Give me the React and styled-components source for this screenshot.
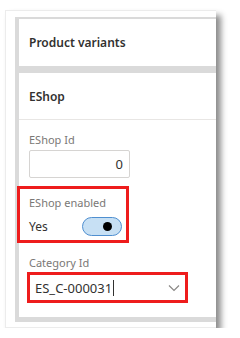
import React from "react";
import styled, { createGlobalStyle } from "styled-components";

const Global = createGlobalStyle`
  html, body { margin: 0; padding: 0; background: #ffffff; }
  body { font-family: "Noto Sans", "Open Sans", Arial, sans-serif; }
  * { box-sizing: border-box; }
`;

const Frame = styled.div`
  margin: 10px 0 0 5px;
  width: 211px;
  height: 318px;
  background: #ffffff;
  border: 1px solid #ececec;
  border-right: none;
  box-shadow: 5px 5px 6px rgba(0, 0, 0, 0.45);
  padding: 6px 0 5px 9px;
  display: flex;
`;

const Page = styled.div`
  flex: 1;
  background: #dadada;
  padding: 2px 0 5px 4px;
  display: flex;
  flex-direction: column;
  gap: 7px;
`;

const Panel = styled.section`
  background: #ffffff;
  display: flex;
  flex-direction: column;
  flex: ${(p) => (p.$grow ? 1 : "none")};
`;

const Header = styled.div`
  height: ${(p) => p.$h}px;
  display: flex;
  align-items: center;
  padding-left: 10px;
  font-size: 12px;
  font-weight: 600;
  color: #323130;
  border-bottom: ${(p) => (p.$line ? "1px solid #e8e6e4" : "none")};
`;

const Body = styled.div`
  padding: 12px 0 0 10px;
  display: flex;
  flex-direction: column;
`;

const Label = styled.div`
  font-size: 11px;
  line-height: 16px;
  color: #7a7876;
  height: 16px;
`;

const NumberBox = styled.div`
  margin-top: 2px;
  width: 101px;
  height: 28px;
  border: 1px solid #d6d4d2;
  border-radius: 2px;
  display: flex;
  align-items: center;
  justify-content: flex-end;
  padding-right: 6px;
  font-size: 13px;
  color: #323130;
`;

const Highlight = styled.div`
  border: 3px solid #ee1c1c;
  margin-left: ${(p) => p.$ml}px;
  margin-top: ${(p) => p.$mt}px;
  width: ${(p) => p.$w}px;
  height: ${(p) => p.$h}px;
  padding: ${(p) => p.$pad};
  display: flex;
  flex-direction: column;
`;

const ToggleRow = styled.div`
  margin-top: 6px;
  display: flex;
  align-items: center;
  gap: 0;
`;

const Value = styled.span`
  width: 53px;
  font-size: 12px;
  color: #323130;
`;

const Toggle = styled.div`
  width: 40px;
  height: 19px;
  border-radius: 10px;
  border: 1px solid #4f8fd0;
  background: #c7e0f4;
  display: flex;
  align-items: center;
  justify-content: flex-end;
  padding-right: 9px;
`;

const Knob = styled.span`
  width: 9px;
  height: 9px;
  border-radius: 50%;
  background: #000000;
`;

const SelectBox = styled.div`
  flex: 1;
  background: #ffffff;
  display: flex;
  align-items: center;
  padding-left: 5px;
  padding-right: 5px;
  font-size: 13px;
  color: #323130;
`;

const Caret = styled.span`
  display: inline-block;
  width: 1px;
  height: 16px;
  background: #323130;
  margin-left: 1px;
`;

const Spacer = styled.span`
  flex: 1;
`;

export default function App() {
  return (
    <>
      <Global />
      <Frame>
        <Page>
          <Panel>
            <Header $h={47}>Product variants</Header>
          </Panel>
          <Panel $grow>
            <Header $h={47} $line>EShop</Header>
            <Body>
              <Label>EShop Id</Label>
              <NumberBox>0</NumberBox>
              <Highlight $ml={-12} $mt={8} $w={112} $h={57} $pad="6px 0 0 9px">
                <Label>EShop enabled</Label>
                <ToggleRow>
                  <Value>Yes</Value>
                  <Toggle>
                    <Knob />
                  </Toggle>
                </ToggleRow>
              </Highlight>
              <Label style={{ marginTop: 12 }}>Category Id</Label>
              <Highlight $ml={-2} $mt={1} $w={161} $h={31} $pad="0">
                <SelectBox>
                  ES_C-000031
                  <Caret />
                  <Spacer />
                  <svg width="12" height="8" viewBox="0 0 12 8">
                    <path d="M1 1.5 L6 6.5 L11 1.5" fill="none" stroke="#8a8886" strokeWidth="1.2" />
                  </svg>
                </SelectBox>
              </Highlight>
            </Body>
          </Panel>
        </Page>
      </Frame>
    </>
  );
}
